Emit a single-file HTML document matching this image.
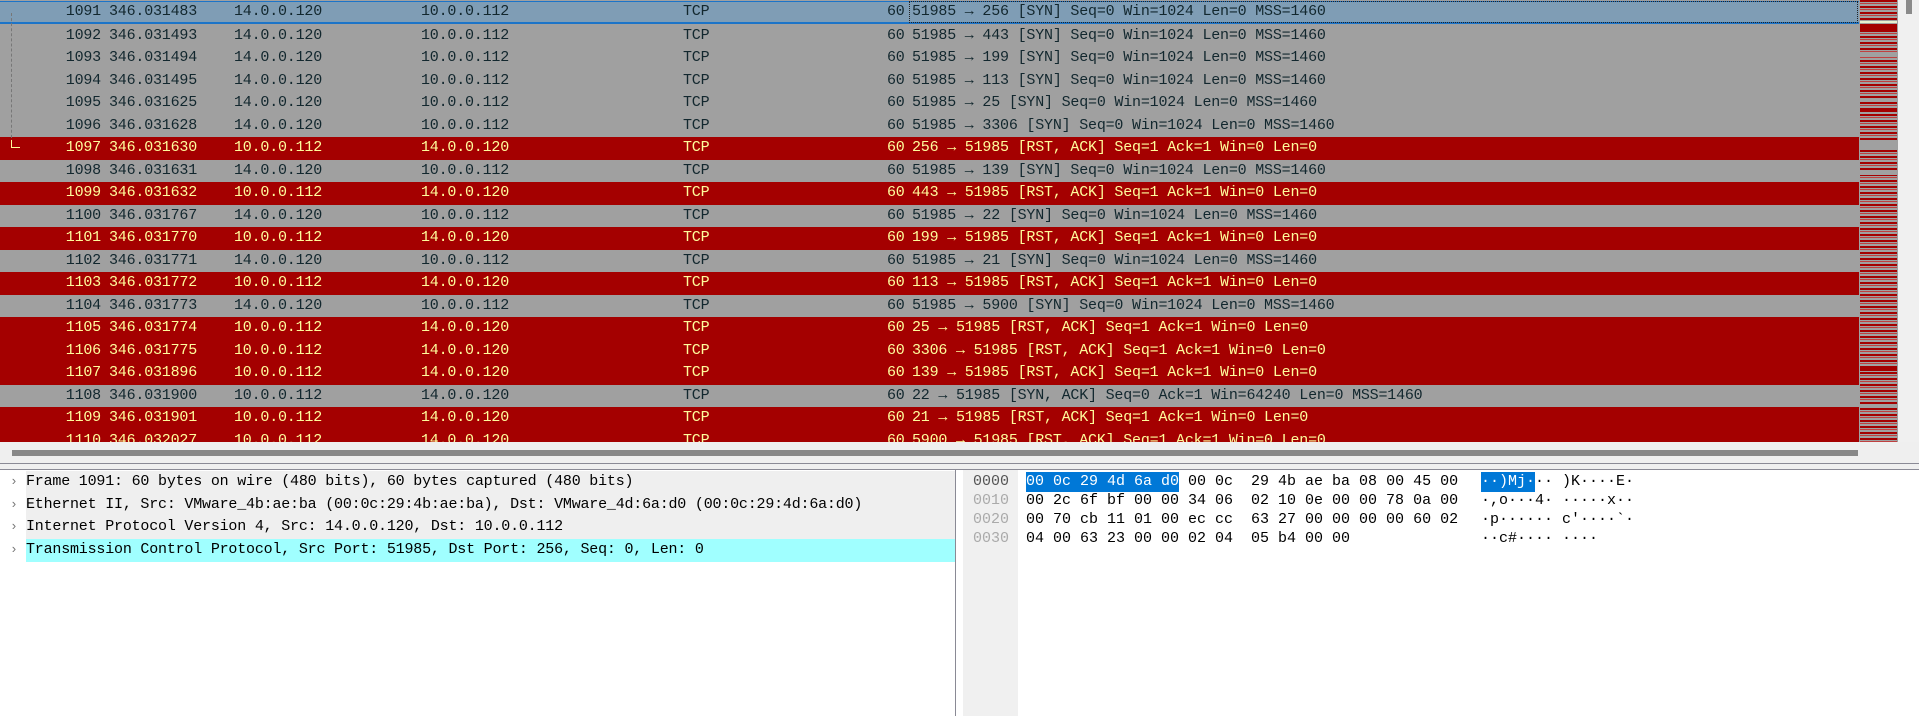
<!DOCTYPE html>
<html><head><meta charset="utf-8"><style>
*{margin:0;padding:0;box-sizing:border-box}
body{width:1919px;height:716px;overflow:hidden;background:#fff;position:relative;font-family:"Liberation Mono",monospace;font-size:15px;letter-spacing:-0.2px}
.list{position:absolute;left:0;top:0;width:1859px;height:442px;overflow:hidden;background:#a0a0a0}
.r{position:absolute;left:0;width:1859px;height:22.5px;line-height:22.5px;white-space:pre}
.g{background:#a0a0a0;color:#12272e}
.d{background:#a40000;color:#fffc9c}
.s{background:#7f9db5;color:#12272e;border-top:1px solid #1c74c8;border-bottom:2px solid #1c74c8;line-height:20px}
.r span{position:absolute;top:0}
.no{left:65px;width:36px;text-align:right}
.t{left:109px}.sr{left:234px}.ds{left:421px}.p{left:683px}.l{left:887px}.i{left:912px}
.mini{position:absolute;left:1859px;top:0;width:39px;height:442px;background:#a0a0a0;overflow:hidden}
.mini div{position:absolute;left:1px;width:37px}
.vs{position:absolute;left:1898px;top:0;width:21px;height:442px;background:#f0f0f0}
.hs{position:absolute;left:0;top:442px;width:1919px;height:28px;background:#efefef;border-bottom:1px solid #8a8a95}
.hs .line{position:absolute;left:0;top:21px;width:1919px;height:1px;background:#8a8a95}
.det{position:absolute;left:0;top:470px;width:956px;height:246px;background:#fff;border-right:1px solid #8a8a95}
.dr{position:absolute;left:26px;width:929px;height:22.5px;line-height:22.5px;background:#efefef;color:#000;white-space:pre}
.ar{position:absolute;left:10px;width:10px;color:#777;font-size:13px;line-height:22.5px}
.hex{position:absolute;left:963px;top:470px;width:956px;height:246px;background:#fff}
.gut{position:absolute;left:0;top:0;width:55px;height:246px;background:#f0f0f0}
.hr{position:absolute;height:19px;line-height:19px;white-space:pre;color:#000;letter-spacing:0px}
.off{left:10px;color:#aaa}
.sel{background:#0078d7;color:#fff}
</style></head><body>
<div class="list">
<div class="r s" style="top:1px"><span class="no">1091</span><span class="t">346.031483</span><span class="sr">14.0.0.120</span><span class="ds">10.0.0.112</span><span class="p">TCP</span><span class="l">60</span><span class="i" style="outline:1px dotted #222;width:947px;padding-left:2px;left:910px">51985 → 256 [SYN] Seq=0 Win=1024 Len=0 MSS=1460</span></div>
<div class="r g" style="top:24.5px"><span class="no">1092</span><span class="t">346.031493</span><span class="sr">14.0.0.120</span><span class="ds">10.0.0.112</span><span class="p">TCP</span><span class="l">60</span><span class="i">51985 → 443 [SYN] Seq=0 Win=1024 Len=0 MSS=1460</span></div>
<div class="r g" style="top:47px"><span class="no">1093</span><span class="t">346.031494</span><span class="sr">14.0.0.120</span><span class="ds">10.0.0.112</span><span class="p">TCP</span><span class="l">60</span><span class="i">51985 → 199 [SYN] Seq=0 Win=1024 Len=0 MSS=1460</span></div>
<div class="r g" style="top:69.5px"><span class="no">1094</span><span class="t">346.031495</span><span class="sr">14.0.0.120</span><span class="ds">10.0.0.112</span><span class="p">TCP</span><span class="l">60</span><span class="i">51985 → 113 [SYN] Seq=0 Win=1024 Len=0 MSS=1460</span></div>
<div class="r g" style="top:92px"><span class="no">1095</span><span class="t">346.031625</span><span class="sr">14.0.0.120</span><span class="ds">10.0.0.112</span><span class="p">TCP</span><span class="l">60</span><span class="i">51985 → 25 [SYN] Seq=0 Win=1024 Len=0 MSS=1460</span></div>
<div class="r g" style="top:114.5px"><span class="no">1096</span><span class="t">346.031628</span><span class="sr">14.0.0.120</span><span class="ds">10.0.0.112</span><span class="p">TCP</span><span class="l">60</span><span class="i">51985 → 3306 [SYN] Seq=0 Win=1024 Len=0 MSS=1460</span></div>
<div class="r d" style="top:137px"><span class="no">1097</span><span class="t">346.031630</span><span class="sr">10.0.0.112</span><span class="ds">14.0.0.120</span><span class="p">TCP</span><span class="l">60</span><span class="i">256 → 51985 [RST, ACK] Seq=1 Ack=1 Win=0 Len=0</span></div>
<div class="r g" style="top:159.5px"><span class="no">1098</span><span class="t">346.031631</span><span class="sr">14.0.0.120</span><span class="ds">10.0.0.112</span><span class="p">TCP</span><span class="l">60</span><span class="i">51985 → 139 [SYN] Seq=0 Win=1024 Len=0 MSS=1460</span></div>
<div class="r d" style="top:182px"><span class="no">1099</span><span class="t">346.031632</span><span class="sr">10.0.0.112</span><span class="ds">14.0.0.120</span><span class="p">TCP</span><span class="l">60</span><span class="i">443 → 51985 [RST, ACK] Seq=1 Ack=1 Win=0 Len=0</span></div>
<div class="r g" style="top:204.5px"><span class="no">1100</span><span class="t">346.031767</span><span class="sr">14.0.0.120</span><span class="ds">10.0.0.112</span><span class="p">TCP</span><span class="l">60</span><span class="i">51985 → 22 [SYN] Seq=0 Win=1024 Len=0 MSS=1460</span></div>
<div class="r d" style="top:227px"><span class="no">1101</span><span class="t">346.031770</span><span class="sr">10.0.0.112</span><span class="ds">14.0.0.120</span><span class="p">TCP</span><span class="l">60</span><span class="i">199 → 51985 [RST, ACK] Seq=1 Ack=1 Win=0 Len=0</span></div>
<div class="r g" style="top:249.5px"><span class="no">1102</span><span class="t">346.031771</span><span class="sr">14.0.0.120</span><span class="ds">10.0.0.112</span><span class="p">TCP</span><span class="l">60</span><span class="i">51985 → 21 [SYN] Seq=0 Win=1024 Len=0 MSS=1460</span></div>
<div class="r d" style="top:272px"><span class="no">1103</span><span class="t">346.031772</span><span class="sr">10.0.0.112</span><span class="ds">14.0.0.120</span><span class="p">TCP</span><span class="l">60</span><span class="i">113 → 51985 [RST, ACK] Seq=1 Ack=1 Win=0 Len=0</span></div>
<div class="r g" style="top:294.5px"><span class="no">1104</span><span class="t">346.031773</span><span class="sr">14.0.0.120</span><span class="ds">10.0.0.112</span><span class="p">TCP</span><span class="l">60</span><span class="i">51985 → 5900 [SYN] Seq=0 Win=1024 Len=0 MSS=1460</span></div>
<div class="r d" style="top:317px"><span class="no">1105</span><span class="t">346.031774</span><span class="sr">10.0.0.112</span><span class="ds">14.0.0.120</span><span class="p">TCP</span><span class="l">60</span><span class="i">25 → 51985 [RST, ACK] Seq=1 Ack=1 Win=0 Len=0</span></div>
<div class="r d" style="top:339.5px"><span class="no">1106</span><span class="t">346.031775</span><span class="sr">10.0.0.112</span><span class="ds">14.0.0.120</span><span class="p">TCP</span><span class="l">60</span><span class="i">3306 → 51985 [RST, ACK] Seq=1 Ack=1 Win=0 Len=0</span></div>
<div class="r d" style="top:362px"><span class="no">1107</span><span class="t">346.031896</span><span class="sr">10.0.0.112</span><span class="ds">14.0.0.120</span><span class="p">TCP</span><span class="l">60</span><span class="i">139 → 51985 [RST, ACK] Seq=1 Ack=1 Win=0 Len=0</span></div>
<div class="r g" style="top:384.5px"><span class="no">1108</span><span class="t">346.031900</span><span class="sr">10.0.0.112</span><span class="ds">14.0.0.120</span><span class="p">TCP</span><span class="l">60</span><span class="i">22 → 51985 [SYN, ACK] Seq=0 Ack=1 Win=64240 Len=0 MSS=1460</span></div>
<div class="r d" style="top:407px"><span class="no">1109</span><span class="t">346.031901</span><span class="sr">10.0.0.112</span><span class="ds">14.0.0.120</span><span class="p">TCP</span><span class="l">60</span><span class="i">21 → 51985 [RST, ACK] Seq=1 Ack=1 Win=0 Len=0</span></div>
<div class="r d" style="top:429.5px"><span class="no">1110</span><span class="t">346.032027</span><span class="sr">10.0.0.112</span><span class="ds">14.0.0.120</span><span class="p">TCP</span><span class="l">60</span><span class="i">5900 → 51985 [RST, ACK] Seq=1 Ack=1 Win=0 Len=0</span></div>
<div style="position:absolute;left:11px;top:13px;width:1px;height:135px;border-left:1px dashed #777"></div>
<div style="position:absolute;left:11px;top:147px;width:9px;height:1px;background:#fffc9c"></div>
<div style="position:absolute;left:11px;top:140px;width:1px;height:8px;background:#fffc9c"></div>
</div>
<div class="mini">
<div style="top:0;height:442px;background:repeating-linear-gradient(#a40000 0 2px,#a0a0a0 2px 3px,#c04040 3px 4px,#a0a0a0 4px 6px)"></div>
<div style="top:21px;height:2px;background:#e8f0d0"></div>
<div style="top:26px;height:6px;background:#a40000"></div>
<div style="top:53px;height:4px;background:#a0a0a0"></div>
<div style="top:98px;height:3px;background:#a0a0a0"></div>
<div style="top:108px;height:4px;background:#a40000"></div>
<div style="top:141px;height:4px;background:#a0a0a0"></div>
<div style="top:145px;height:3px;background:#a0a0a0"></div>
<div style="top:171px;height:4px;background:#a0a0a0"></div>
<div style="top:366px;height:5px;background:#a40000"></div>
<div style="top:405px;height:3px;background:#a0a0a0"></div>
</div>
<div class="vs"><div style="position:absolute;left:8px;top:0;width:6px;height:14px;background:#8a8a8a"></div></div>
<div class="hs"><div style="position:absolute;left:12px;top:8px;width:1846px;height:6px;background:#888"></div><div class="line"></div></div>
<div class="det">
<div class="dr" style="top:1px">Frame 1091: 60 bytes on wire (480 bits), 60 bytes captured (480 bits)</div><div class="ar" style="top:1px">›</div>
<div class="dr" style="top:23.5px">Ethernet II, Src: VMware_4b:ae:ba (00:0c:29:4b:ae:ba), Dst: VMware_4d:6a:d0 (00:0c:29:4d:6a:d0)</div><div class="ar" style="top:23.5px">›</div>
<div class="dr" style="top:46px">Internet Protocol Version 4, Src: 14.0.0.120, Dst: 10.0.0.112</div><div class="ar" style="top:46px">›</div>
<div class="dr" style="top:69px;background:#a0ffff">Transmission Control Protocol, Src Port: 51985, Dst Port: 256, Seq: 0, Len: 0</div><div class="ar" style="top:69px">›</div>
</div>
<div class="hex"><div class="gut"></div>
<div class="hr off" style="top:2px;color:#555">0000</div>
<div class="hr off" style="top:21px">0010</div>
<div class="hr off" style="top:40px">0020</div>
<div class="hr off" style="top:59px">0030</div>
<div class="hr" style="left:63px;top:2px"><span class="sel" style="display:inline-block;height:20px">00 0c 29 4d 6a d0</span> 00 0c  29 4b ae ba 08 00 45 00</div>
<div class="hr" style="left:63px;top:21px">00 2c 6f bf 00 00 34 06  02 10 0e 00 00 78 0a 00</div>
<div class="hr" style="left:63px;top:40px">00 70 cb 11 01 00 ec cc  63 27 00 00 00 00 60 02</div>
<div class="hr" style="left:63px;top:59px">04 00 63 23 00 00 02 04  05 b4 00 00</div>
<div class="hr" style="left:518px;top:2px"><span class="sel" style="display:inline-block;height:20px">··)Mj·</span>·· )K····E·</div>
<div class="hr" style="left:518px;top:21px">·,o···4· ·····x··</div>
<div class="hr" style="left:518px;top:40px">·p······ c'····`·</div>
<div class="hr" style="left:518px;top:59px">··c#···· ····</div>
</div>
</body></html>
